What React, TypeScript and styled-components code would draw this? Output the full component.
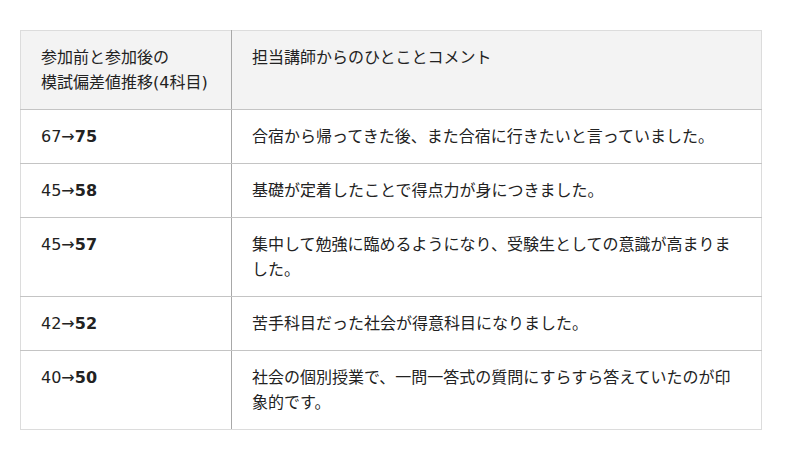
import React from "react";
import styled, { createGlobalStyle } from "styled-components";

const Global = createGlobalStyle`
  html, body { margin: 0; padding: 0; background: #fff; }
  body {
    font-family: "DejaVu Sans", "Noto Sans CJK JP", sans-serif;
    color: #222;
  }
`;

const Page = styled.div`
  padding: 30px 38px 30px 20px;
`;

const Table = styled.table`
  width: 742px;
  border-collapse: collapse;
  border: 1px solid #dcdcdc;
  font-size: 16px;
  line-height: 25px;
`;

const HeadCell = styled.th<{ $first?: boolean }>`
  background: #f3f3f3;
  font-weight: normal;
  text-align: left;
  vertical-align: top;
  padding: 14px 20px 14px 20px;
  width: ${(p) => (p.$first ? "170px" : "auto")};
  border-right: ${(p) => (p.$first ? "1px solid #a8a8a8" : "none")};
  border-bottom: 1px solid #c4c4c4;
`;

const Cell = styled.td<{ $first?: boolean }>`
  text-align: left;
  vertical-align: top;
  padding: 14px 20px 14px 20px;
  border-right: ${(p) => (p.$first ? "1px solid #a8a8a8" : "none")};
  border-bottom: 1px solid #c4c4c4;
  tr:last-child > & {
    border-bottom: 1px solid #dcdcdc;
  }
`;

const After = styled.strong`
  font-weight: bold;
`;

const rows = [
  { before: "67", after: "75", comment: "合宿から帰ってきた後、また合宿に行きたいと言っていました。" },
  { before: "45", after: "58", comment: "基礎が定着したことで得点力が身につきました。" },
  { before: "45", after: "57", comment: "集中して勉強に臨めるようになり、受験生としての意識が高まりました。" },
  { before: "42", after: "52", comment: "苦手科目だった社会が得意科目になりました。" },
  { before: "40", after: "50", comment: "社会の個別授業で、一問一答式の質問にすらすら答えていたのが印象的です。" },
];

export default function App() {
  return (
    <Page>
      <Global />
      <Table>
        <thead>
          <tr>
            <HeadCell $first>
              参加前と参加後の
              <br />
              模試偏差値推移(4科目)
            </HeadCell>
            <HeadCell>担当講師からのひとことコメント</HeadCell>
          </tr>
        </thead>
        <tbody>
          {rows.map((r, i) => (
            <tr key={i}>
              <Cell $first>
                {r.before}→<After>{r.after}</After>
              </Cell>
              <Cell>{r.comment}</Cell>
            </tr>
          ))}
        </tbody>
      </Table>
    </Page>
  );
}
